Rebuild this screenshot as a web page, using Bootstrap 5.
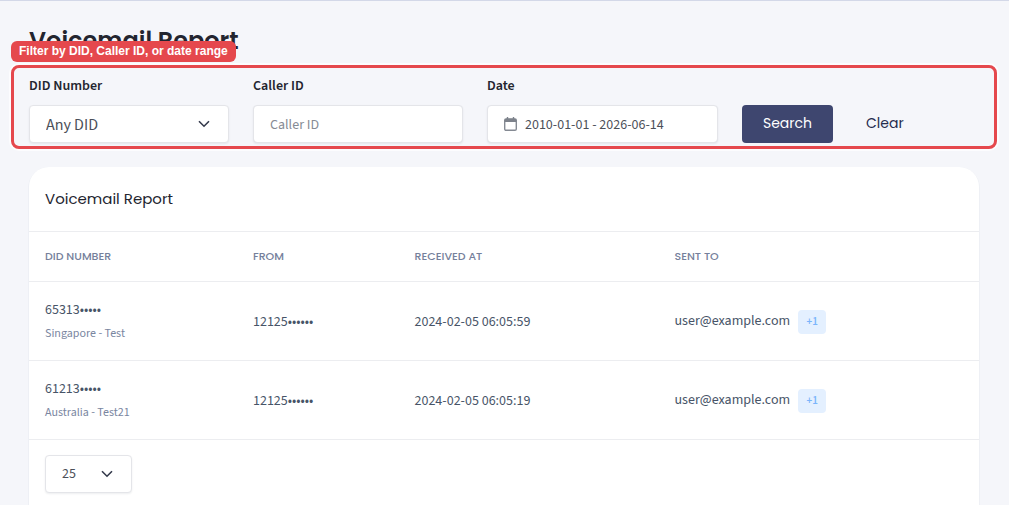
<!DOCTYPE html>
<html lang="en">
<head>
<meta charset="utf-8">
<meta name="viewport" content="width=device-width, initial-scale=1">
<title>Voicemail Report</title>
<link href="https://cdn.jsdelivr.net/npm/bootstrap@5.3.0/dist/css/bootstrap.min.css" rel="stylesheet">
<style>
  :root { --ui: "Source Sans Pro", "Source Sans 3", "Noto Sans CJK SC", sans-serif; --display: Poppins, Inter, sans-serif; --line: #ecedf0; }
  body { background: #f5f6fa; font-family: var(--ui); font-size: 14px; line-height: 20px; color: #475467; }
  .page { border-top: 1px solid #d3d8e8; padding: 22px 30px 0 29px; }
  .page-title { font: 600 24px/36px var(--display); color: #23252f; margin: 0 0 6px; }
  .filters { position: relative; margin: 0 -18px 18px; padding: 8px 15px 3px; border: 3px solid #e5484d; border-radius: 8px; box-shadow: 0 0 0 2px rgba(255,255,255,.7); column-gap: 24px; }
  .hint { position: absolute; left: -3px; top: -27px; padding: 0 8px; border-radius: 6px; background: #e5484d; color: #fff; font: 700 12px/21px "Liberation Sans", sans-serif; white-space: nowrap; }
  .filters label { display: block; font-size: 14px; font-weight: 600; line-height: 20px; color: #23252f; margin-bottom: 9px; }
  .box { height: 38px; border: 1px solid #e4e5e9; border-radius: 4px; background-color: #fff; box-shadow: 0 1px 2px rgba(30,35,60,.08); font-size: 14px; line-height: 20px; color: #4b4f58; padding: 2px 16px 0; }
  .box::placeholder { color: #868b94; }
  .form-select.box { background-image: url("data:image/svg+xml,%3Csvg xmlns='http://www.w3.org/2000/svg' viewBox='0 0 12 8'%3E%3Cpath d='M1 1.2 6 6.2 11 1.2' fill='none' stroke='%23343a4c' stroke-width='1.6'/%3E%3C/svg%3E"); background-size: 12px 8px; background-position: right 18px center; }
  .w-did { width: 200px; } .w-caller { width: 210px; } .w-date { width: 231px; } .w-size { width: 87px; }
  .form-select.did { font-size: 16px; }
  .form-select.w-size { padding-top: 0; }
  .date-input { padding-left: 37px; }
  .cal { position: absolute; left: 17px; top: 12px; }
  .btn-act { height: 38px; border-radius: 4px; font: 400 14px/20px var(--display); padding: 0 20px 2px; }
  .btn-search { width: 91px; background: #3e466f; color: #fff; border: 0; }
  .btn-search:hover { background: #323960; color: #fff; }
  .btn-clear { color: #262c4e; border: 0; padding: 0 9px 2px; }
  .report { background: #fff; border-radius: 20px 20px 0 0; box-shadow: 0 1px 0 1px rgba(40,50,90,.03); }
  .report h2 { font: 400 15px/24px var(--display); color: #23252f; margin: 0; padding: 20px 16px; border-bottom: 1px solid var(--line); }
  .report .table { --bs-table-bg: transparent; color: #475467; table-layout: fixed; margin: 0; }
  .report th { font: 500 11px/18px var(--display); color: #75809b; padding: 15px 16px 16px; border-color: var(--line); }
  .report td { padding: 18px 16px 17px; border-color: var(--line); vertical-align: middle; }
  .c1 { width: 208px; } .c2 { width: 17%; } .c3 { width: 260px; }
  .place { font-size: 12px; line-height: 18px; color: #7a869f; margin-top: 5px; }
  .more { display: inline-block; width: 28px; margin-left: 8px; border-radius: 4px; background: #e4f0ff; color: #7ab5fb; font-size: 11px; font-weight: 600; line-height: 24px; text-align: center; }
  .pager { padding: 15px 16px; }
</style>
</head>
<body>
<main class="page d-flex flex-column min-vh-100">
  <h1 class="page-title">Voicemail Report</h1>
  <form class="filters d-flex flex-wrap align-items-end">
    <span class="hint">Filter by DID, Caller ID, or date range</span>
    <div class="w-did">
      <label for="did">DID Number</label>
      <select id="did" class="form-select box did"><option>Any DID</option></select>
    </div>
    <div class="w-caller">
      <label for="caller">Caller ID</label>
      <input id="caller" type="text" class="form-control box" placeholder="Caller ID">
    </div>
    <div class="w-date">
      <label for="date">Date</label>
      <div class="position-relative">
        <input id="date" type="text" class="form-control box date-input" value="2010-01-01 - 2026-06-14">
        <svg class="cal" width="13" height="14" viewBox="0 0 13 14" aria-hidden="true"><rect x=".7" y="2" width="11.6" height="11.3" rx="1.3" fill="none" stroke="#858a93" stroke-width="1.4"/><path d="M.7 5V3.2Q.7 1.7 2.2 1.7h8.6q1.5 0 1.5 1.5V5z" fill="#7d828b"/><path d="M3.5 0v3M9.5 0v3" stroke="#7d828b" stroke-width="1.4"/></svg>
      </div>
    </div>
    <div class="d-flex gap-4">
      <button type="submit" class="btn btn-act btn-search">Search</button>
      <button type="reset" class="btn btn-act btn-clear">Clear</button>
    </div>
  </form>
  <section class="report flex-grow-1">
    <h2>Voicemail Report</h2>
    <table class="table">
      <thead>
        <tr><th class="c1" scope="col">DID NUMBER</th><th class="c2" scope="col">FROM</th><th class="c3" scope="col">RECEIVED AT</th><th scope="col">SENT TO</th></tr>
      </thead>
      <tbody>
        <tr>
          <td>65313•••••<div class="place">Singapore - Test</div></td>
          <td>12125••••••</td>
          <td>2024-02-05 06:05:59</td>
          <td>user@example.com<span class="more">+1</span></td>
        </tr>
        <tr>
          <td>61213•••••<div class="place">Australia - Test21</div></td>
          <td>12125••••••</td>
          <td>2024-02-05 06:05:19</td>
          <td>user@example.com<span class="more">+1</span></td>
        </tr>
      </tbody>
    </table>
    <div class="pager">
      <select class="form-select box w-size" aria-label="Rows per page"><option>25</option></select>
    </div>
  </section>
</main>
<script src="https://cdn.jsdelivr.net/npm/bootstrap@5.3.0/dist/js/bootstrap.bundle.min.js"></script>
</body>
</html>
